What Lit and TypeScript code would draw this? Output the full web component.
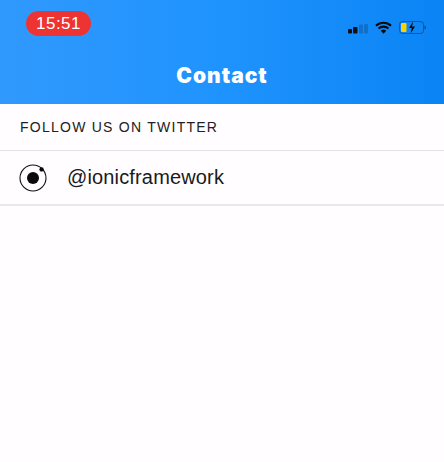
import { LitElement, html, css, svg } from 'lit'
import { customElement } from 'lit/decorators.js'

// Status bar glyphs, drawn by hand from the reference
const signalIcon = svg`
  <rect x="0" y="5" width="4" height="4.500" rx="0.8" fill="#111"></rect>
  <rect x="5" y="3" width="4.500" height="6.500" rx="0.8" fill="#111"></rect>
  <rect x="11" y="0.500" width="4" height="9" rx="0.8" fill="#111" opacity="0.2"></rect>
  <rect x="16" y="0" width="4" height="9.500" rx="0.8" fill="#111" opacity="0.2"></rect>
`

const wifiIcon = svg`
  <path d="M1 4.700a11 11 0 0 1 15 0M3.500 7.600a7.400 7.400 0 0 1 10 0" fill="none" stroke="#0a0a0a" stroke-width="2.100"></path>
  <path d="M5.800 9.800a4 4 0 0 1 5.400 0L8.500 12.800z" fill="#0a0a0a"></path>
`

const batteryIcon = svg`
  <rect x="0.500" y="0.500" width="24" height="12" rx="3" fill="none" stroke="#123" stroke-opacity="0.45"></rect>
  <rect x="2" y="2" width="5.500" height="9" rx="1" fill="#fdd000"></rect>
  <path d="M25.500 4.500v4c.9-.3 1.500-1.100 1.500-2s-.6-1.700-1.500-2z" fill="#123" fill-opacity="0.6"></path>
  <path d="M14 0.500l-4 6.500h2.800l-1.200 5.500 4.400-7h-2.900z" fill="#0a0a0a"></path>
`

const ionicLogo = svg`
  <circle cx="14" cy="14" r="13" fill="none" stroke="#111" stroke-width="1.100"></circle>
  <circle cx="14" cy="14" r="6" fill="#0a0a0a"></circle>
  <circle cx="22.600" cy="5.400" r="2.200" fill="#0a0a0a"></circle>
`

@customElement('app-root')
export class AppRoot extends LitElement {
  static styles = css`
    :host {
      display: block;
      height: 462px;
      background: #fffdff;
      font-family: 'Liberation Sans', Arial, sans-serif;
      overflow: hidden;
    }

    .toolbar {
      height: 104px;
      box-sizing: border-box;
      background: linear-gradient(90deg, #3099fd 0%, #1f93fd 50%, #0a84f5 100%);
      display: flex;
      flex-direction: column;
    }

    .status-bar {
      height: 51px;
      box-sizing: border-box;
      padding: 11px 17px 0 26px;
      display: flex;
      justify-content: space-between;
      align-items: flex-start;
    }

    .clock {
      width: 65px;
      height: 25px;
      border-radius: 13px;
      background: #ee3333;
      color: #fff;
      font-size: 17px;
      letter-spacing: 0.5px;
      display: flex;
      align-items: center;
      justify-content: center;
    }

    .status-icons {
      display: flex;
      align-items: flex-start;
      gap: 7px;
      padding-top: 10px;
    }

    .signal {
      margin-top: 3px;
    }

    .title {
      margin: 0;
      text-align: center;
      color: #fff;
      font-family: 'Inter', 'Liberation Sans', sans-serif;
      font-size: 21px;
      font-weight: 900;
      letter-spacing: 1px;
      line-height: 50px;
    }

    .list-header {
      height: 47px;
      box-sizing: border-box;
      padding: 0 20px;
      display: flex;
      align-items: center;
      border-bottom: 1px solid #e4e4e6;
      color: #222;
      font-size: 14px;
      letter-spacing: 1.250px;
    }

    .item {
      height: 55px;
      box-sizing: border-box;
      padding: 0 19px;
      display: flex;
      align-items: center;
      gap: 20px;
      border-bottom: 2px solid #e8e8ea;
      color: #1a1a1a;
      font-size: 20px;
      letter-spacing: 0.150px;
    }

    svg {
      display: block;
    }
  `

  render() {
    return html`
      <header class="toolbar">
        <div class="status-bar">
          <div class="clock">15:51</div>
          <div class="status-icons">
            <svg class="signal" width="20" height="10" viewBox="0 0 20 10">${signalIcon}</svg>
            <svg width="17" height="13" viewBox="0 0 17 13">${wifiIcon}</svg>
            <svg width="28" height="13" viewBox="0 0 28 13">${batteryIcon}</svg>
          </div>
        </div>
        <h1 class="title">Contact</h1>
      </header>
      <div class="list-header">FOLLOW US ON TWITTER</div>
      <div class="item">
        <svg width="28" height="28" viewBox="0 0 28 28">${ionicLogo}</svg>
        <span>@ionicframework</span>
      </div>
    `
  }
}
